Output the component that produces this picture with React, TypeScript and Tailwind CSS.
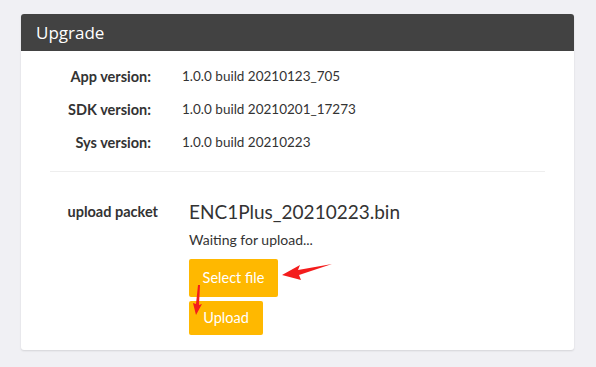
export default function App() {
  const versions = [
    { label: "App version:", value: "1.0.0 build 20210123_705" },
    { label: "SDK version:", value: "1.0.0 build 20210201_17273" },
    { label: "Sys version:", value: "1.0.0 build 20210223" },
  ];

  return (
    <div
      className="h-[367px] w-[596px] bg-[#f0f0f4] pt-[14px] pl-[21px]"
      style={{ fontFamily: 'Lato, "Open Sans", sans-serif' }}
    >
      <div className="relative w-[553px] overflow-hidden rounded-[3px] bg-white shadow-[0_1px_2px_rgba(0,0,0,0.12)]">
        <div
          className="flex h-[37px] items-center bg-[#424242] pl-[15px] text-[17px] text-white"
          style={{ fontFamily: '"Open Sans", sans-serif' }}
        >
          Upgrade
        </div>

        <div className="pt-[9px]">
          {versions.map((v) => (
            <div key={v.label} className="flex h-[33px] items-center">
              <div className="w-[130px] text-right text-[14.5px] font-bold text-[#333]">{v.label}</div>
              <div className="pl-[31px] text-[13.5px] text-[#333]">{v.value}</div>
            </div>
          ))}
        </div>

        <div className="mx-[29px] mt-[12px] border-t border-[#eeeeee]" />

        <div className="flex pt-[28px] pb-[15px]">
          <div className="w-[137px] pt-[1px] text-right text-[14.5px] font-bold text-[#333]">
            upload packet
          </div>
          <div className="flex flex-col items-start pl-[31px]">
            <div className="text-[19px] leading-[24px] text-[#333]">ENC1Plus_20210223.bin</div>
            <div className="mt-[6px] text-[14px] leading-[20px] text-[#333]">Waiting for upload...</div>
            <button className="mt-[9px] flex h-[38px] w-[89px] items-center justify-center rounded-[2px] bg-[#ffb800] text-[14.5px] text-white">
              Select file
            </button>
            <button className="mt-[4px] flex h-[34px] w-[74px] items-center justify-center rounded-[2px] bg-[#ffb800] text-[14.5px] text-white">
              Upload
            </button>
          </div>
        </div>

        <svg
          className="pointer-events-none absolute left-0 top-0"
          width="553"
          height="340"
          viewBox="21 14 553 340"
        >
          <path d="M332 264 L298 270 L300 265 L282 275 L301 280 L299 275 Z" fill="#f41c1c" />
          <path d="M198 285 L200 285 L199 305 L202 304 L196 315 L193 303 L196 304 Z" fill="#f41c1c" />
        </svg>
      </div>
    </div>
  );
}
